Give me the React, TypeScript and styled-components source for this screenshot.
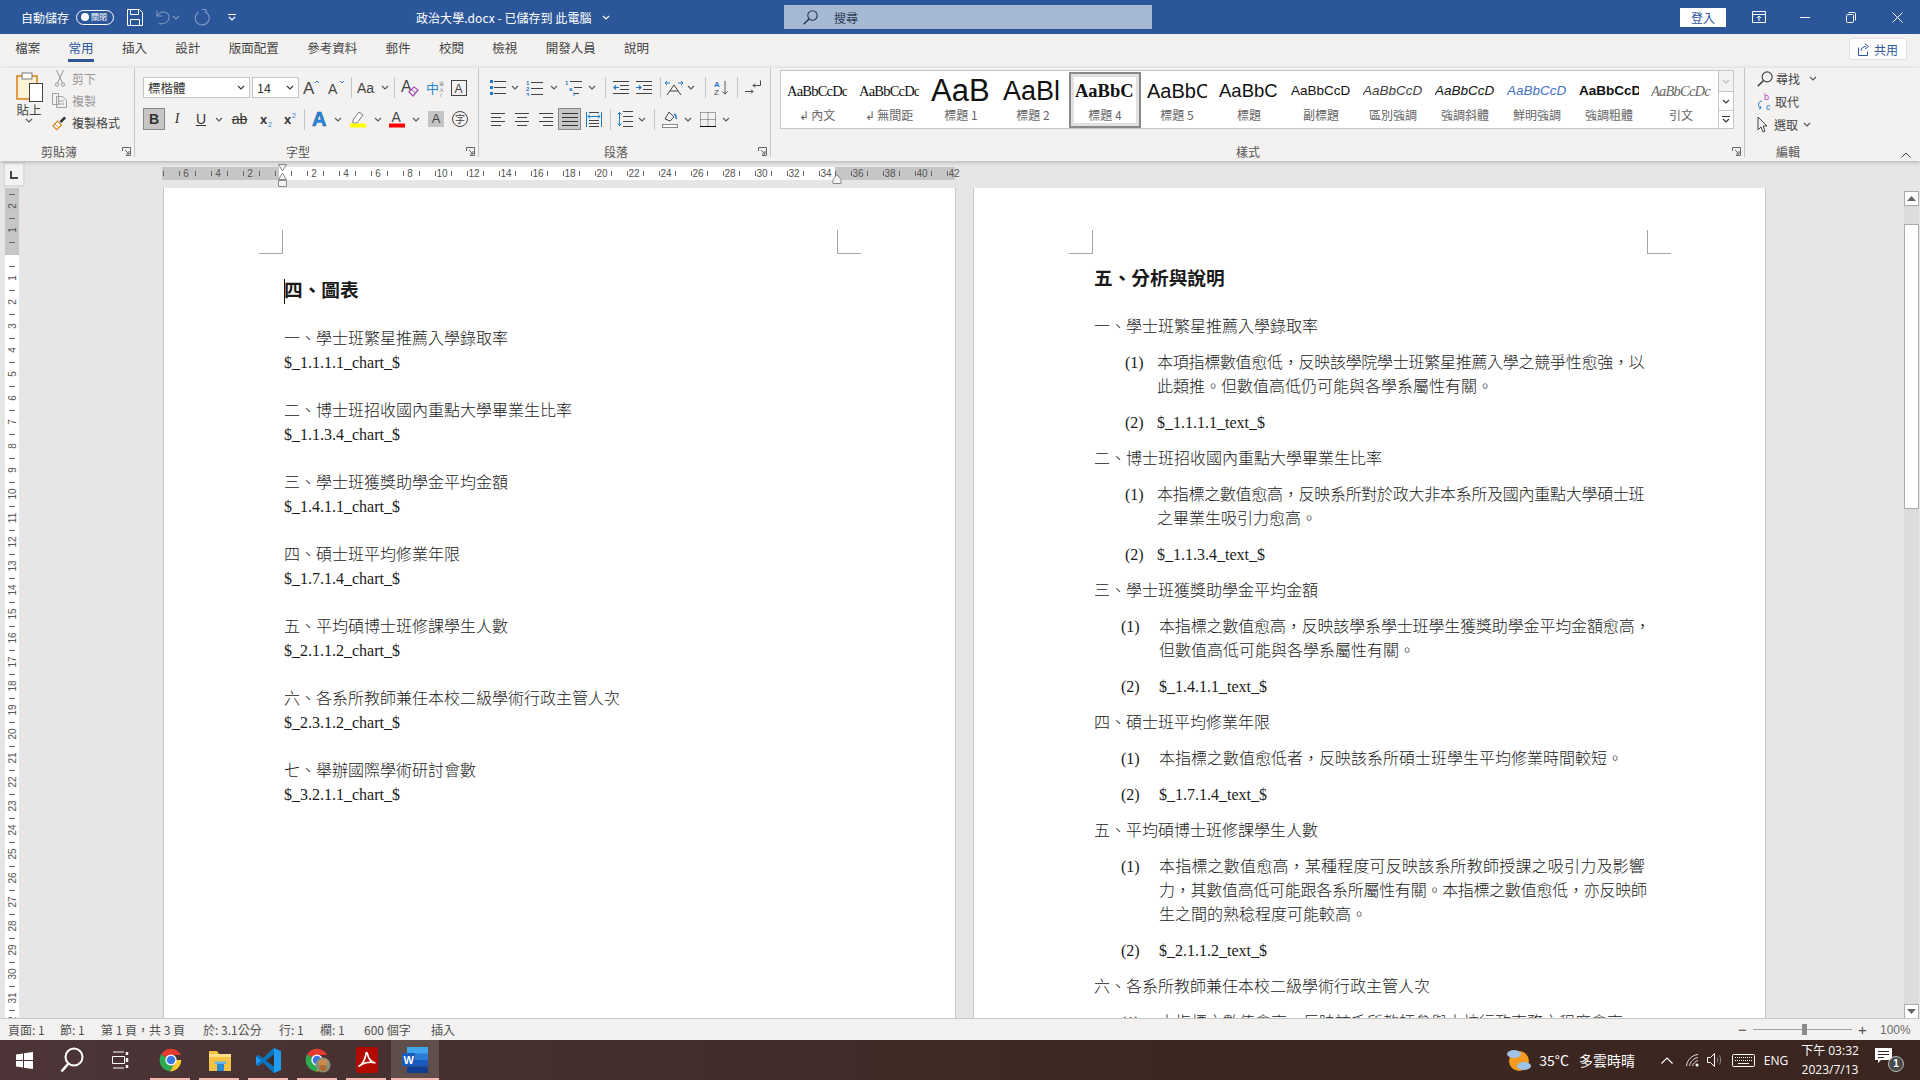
import React from "react";
import styled, { createGlobalStyle } from "styled-components";

const UI = `"Noto Sans CJK TC", "Noto Sans", sans-serif`;
const LATIN = `"Open Sans", "Noto Sans CJK TC", sans-serif`;
const DOC = `"Liberation Serif", "Noto Sans CJK TC", serif`;
const SANS = `"Liberation Sans", sans-serif`;
const SERIF = `"Liberation Serif", serif`;

const Global = createGlobalStyle`
  * { box-sizing: border-box; }
  html, body { margin: 0; padding: 0; overflow: hidden; background: #e6e6e6; }
`;

const Shell = styled.div`
  width: 1920px;
  height: 1080px;
  display: flex;
  flex-direction: column;
  overflow: hidden;
  font-family: ${UI};
  color: #444;
`;

/* ---------- title bar ---------- */
const TitleBar = styled.div`
  height: 34px;
  flex: none;
  display: flex;
  align-items: center;
  background: #2b579a;
  color: #fff;
  font-size: 12px;
`;
const QuickAccess = styled.div`
  width: 416px;
  flex: none;
  display: flex;
  align-items: center;
  padding-left: 21px;
`;
const AutoSave = styled.span`
  width: 50px;
  margin-right: 5px;
  white-space: nowrap;
`;
const Toggle = styled.span`
  width: 38px;
  height: 15px;
  display: flex;
  align-items: center;
  gap: 2px;
  padding-left: 4px;
  border: 1px solid #fff;
  border-radius: 8px;
  font-size: 8px;
  line-height: 1;
  &::before {
    content: "";
    width: 8px;
    height: 8px;
    border-radius: 50%;
    background: #fff;
  }
`;
const QuickTool = styled.span<{ $w: number }>`
  width: ${(p) => p.$w}px;
  display: flex;
  justify-content: center;
  align-items: center;
`;
const DocTitle = styled.div`
  width: 368px;
  flex: none;
  display: flex;
  align-items: center;
  gap: 11px;
  white-space: nowrap;
  letter-spacing: 0.05px;
`;
const SearchBox = styled.div`
  width: 368px;
  height: 24px;
  flex: none;
  display: flex;
  align-items: center;
  gap: 16px;
  padding-left: 19px;
  background: #a6b9d3;
  color: #2b3a55;
`;
const SignIn = styled.span`
  margin-left: auto;
  margin-right: 10px;
  width: 46px;
  height: 19px;
  background: #fff;
  color: #2b579a;
  font-size: 12px;
  line-height: 19px;
  text-align: center;
`;
const WinButton = styled.span`
  width: 46px;
  height: 34px;
  display: flex;
  align-items: center;
  justify-content: center;
`;

/* ---------- tabs ---------- */
const TabBar = styled.div`
  height: 34px;
  flex: none;
  display: flex;
  align-items: stretch;
  padding-left: 1px;
  background: #f3f2f1;
  font-size: 12.5px;
`;
const Tab = styled.span<{ $active?: boolean }>`
  position: relative;
  padding: 0 14.2px;
  line-height: 28px;
  white-space: nowrap;
  color: ${(p) => (p.$active ? "#2b579a" : "#444")};
  ${(p) =>
    p.$active &&
    `&::after { content: ""; position: absolute; left: 14px; right: 14px; top: 25px; height: 3px; background: #2b579a; }`}
`;
const ShareButton = styled.span`
  margin: 4px 13px 0 auto;
  width: 58px;
  height: 22px;
  display: flex;
  align-items: center;
  justify-content: center;
  gap: 3px;
  background: #fff;
  border: 1px solid #e1dfdd;
  border-radius: 2px;
  color: #2b579a;
  font-size: 12px;
`;

/* ---------- ribbon ---------- */
const Ribbon = styled.div`
  position: relative;
  z-index: 2;
  height: 93px;
  flex: none;
  display: flex;
  align-items: flex-start;
  background: #f3f2f1;
  box-shadow: 0 1px 4px rgba(0, 0, 0, 0.25);
`;
const Group = styled.div<{ $w: number; $pl?: number; $last?: boolean }>`
  position: relative;
  width: ${(p) => p.$w}px;
  height: 89px;
  flex: none;
  display: flex;
  flex-direction: column;
  padding-left: ${(p) => p.$pl ?? 0}px;
  border-right: ${(p) => (p.$last ? "0" : "1px solid #c8c6c4")};
`;
const GroupLabel = styled.div<{ $w: number }>`
  margin-top: auto;
  width: ${(p) => p.$w}px;
  height: 10px;
  line-height: 10px;
  text-align: center;
  font-size: 12px;
  color: #555;
`;
const Launcher = styled.svg`
  position: absolute;
  right: 3px;
  bottom: 1px;
  width: 9px;
  height: 9px;
`;
const ToolRow = styled.div<{ $top: number; $h?: number }>`
  display: flex;
  align-items: center;
  height: ${(p) => p.$h ?? 21}px;
  margin-top: ${(p) => p.$top}px;
`;
const Tool = styled.span<{ $w: number; $active?: boolean }>`
  width: ${(p) => p.$w}px;
  height: 22px;
  flex: none;
  display: flex;
  align-items: center;
  justify-content: center;
  ${(p) => p.$active && "background: #c8c6c4; border: 1px solid #8a8886;"}
`;
const Sep = styled.span<{ $w: number }>`
  width: ${(p) => p.$w}px;
  height: 21px;
  flex: none;
  display: flex;
  justify-content: center;
  &::before {
    content: "";
    width: 1px;
    background: #c8c6c4;
  }
`;
const Combo = styled.span<{ $w: number; $mr?: number }>`
  width: ${(p) => p.$w}px;
  height: 21px;
  margin-right: ${(p) => p.$mr ?? 0}px;
  flex: none;
  display: flex;
  align-items: center;
  justify-content: space-between;
  padding: 0 4px;
  background: #fff;
  border: 1px solid #c8c6c4;
  font-size: 12.5px;
  color: #333;
`;

/* clipboard */
const ClipBody = styled.div`
  display: flex;
  height: 66px;
`;
const PasteCol = styled.div`
  width: 46px;
  margin-left: 6px;
  display: flex;
  flex-direction: column;
  align-items: center;
  padding-top: 4px;
  font-size: 12.5px;
  line-height: 16px;
  color: #444;
`;
const ClipCol = styled.div`
  display: flex;
  flex-direction: column;
  margin-top: -1px;
`;
const ClipRow = styled.div<{ $dim?: boolean }>`
  display: flex;
  align-items: center;
  height: 24px;
  gap: 5px;
  font-size: 12px;
  white-space: nowrap;
  color: ${(p) => (p.$dim ? "#9a9a9a" : "#444")};
`;
const ClipIcon = styled.span`
  width: 15px;
  display: flex;
  justify-content: center;
`;

/* gallery */
const Gallery = styled.div`
  width: 954px;
  height: 59px;
  margin: 2px 0 0 9px;
  display: flex;
  background: #fff;
  border: 1px solid #c8c6c4;
`;
const StyleItem = styled.div<{ $selected?: boolean }>`
  width: 72px;
  height: 57px;
  flex: none;
  display: flex;
  flex-direction: column;
  align-items: center;
  padding: ${(p) => (p.$selected ? "1px 4px" : "4px 6px")};
  ${(p) =>
    p.$selected &&
    "margin-top: 1px; height: 56px; border: 2px solid #8a8a8a; outline: 3px solid #e1e1e1; outline-offset: -5px;"}
`;
const StylePreview = styled.div<{ $font: string; $size: number; $bold?: boolean; $italic?: boolean; $color?: string; $ls?: number }>`
  width: 60px;
  height: 32px;
  line-height: 32px;
  overflow: hidden;
  white-space: nowrap;
  text-align: left;
  font-family: ${(p) => p.$font};
  font-size: ${(p) => p.$size}px;
  font-weight: ${(p) => (p.$bold ? 700 : 400)};
  font-style: ${(p) => (p.$italic ? "italic" : "normal")};
  letter-spacing: ${(p) => p.$ls ?? 0}px;
  color: ${(p) => p.$color ?? "#111"};
`;
const StyleName = styled.div`
  height: 16px;
  line-height: 16px;
  font-size: 12px;
  color: #666;
  white-space: nowrap;
`;
const GalleryScroll = styled.div`
  margin-left: auto;
  width: 15px;
  display: flex;
  flex-direction: column;
  border-left: 1px solid #c8c6c4;
  background: #f3f2f1;
`;
const ScrollCell = styled.span<{ $h: number; $on?: boolean }>`
  height: ${(p) => p.$h}px;
  display: flex;
  align-items: center;
  justify-content: center;
  background: ${(p) => (p.$on ? "#fff" : "transparent")};
  & + & {
    border-top: 1px solid #c8c6c4;
  }
`;

/* editing */
const EditBody = styled.div`
  margin-top: -1px;
`;
const EditRow = styled.div<{ $gap?: number }>`
  height: 23px;
  display: flex;
  align-items: center;
  gap: ${(p) => p.$gap ?? 3}px;
  font-size: 12px;
  white-space: nowrap;
`;
const EditCaret = styled.span`
  margin-left: 6px;
  display: flex;
`;
const Collapse = styled.svg`
  position: absolute;
  right: 9px;
  bottom: 3px;
  width: 10px;
  height: 6px;
`;

/* ---------- ruler row ---------- */
const RulerRow = styled.div`
  height: 27px;
  flex: none;
  display: flex;
  align-items: flex-start;
  background: #e6e6e6;
`;
const RulerCorner = styled.div`
  width: 22px;
  height: 25px;
  margin: 1px 137px 0 3px;
  display: flex;
  align-items: center;
  justify-content: center;
  background: #f3f3f3;
  border: 2px solid #dcdcdc;
  &::before {
    content: "";
    width: 6px;
    height: 6px;
    border-left: 2px solid #444;
    border-bottom: 2px solid #444;
  }
`;
const RulerSvg = styled.svg`
  overflow: visible;
`;

/* ---------- workspace ---------- */
const Workspace = styled.div`
  height: 830px;
  flex: none;
  display: flex;
  align-items: flex-start;
  background: #e6e6e6;
  overflow: hidden;
`;
const VRulerBox = styled.div`
  width: 14px;
  margin: 0 144px 0 5px;
  flex: none;
`;
const Pages = styled.div`
  display: flex;
  gap: 17px;
  flex: none;
`;
const Page = styled.div`
  width: 793px;
  height: 830px;
  overflow: hidden;
  padding: 42px 94px 0 95px;
  background: #fff;
  border-left: 1px solid #c6c6c6;
  border-right: 1px solid #c6c6c6;
  font-family: ${DOC};
  font-size: 16px;
  font-weight: 300;
  color: #1a1a1a;
`;
const CropRow = styled.div`
  display: flex;
  justify-content: space-between;
`;
const CropMark = styled.span<{ $right?: boolean }>`
  width: 24px;
  height: 24px;
  border-bottom: 1px solid #a6a6a6;
  ${(p) => (p.$right ? "border-left" : "border-right")}: 1px solid #a6a6a6;
`;
const PageBody = styled.div`
  margin-left: 25px;
`;
const DocHeading = styled.h2<{ $top: number; $caret?: boolean }>`
  position: relative;
  margin: ${(p) => p.$top}px 0 22px;
  font-family: ${DOC};
  font-size: 18.67px;
  line-height: 28px;
  font-weight: 700;
  ${(p) =>
    p.$caret &&
    `&::before { content: ""; position: absolute; left: 0; top: 2px; width: 1px; height: 25px; background: #111; }`}
`;
const ChartBlock = styled.div`
  margin-bottom: 24px;
`;
const DocLine = styled.div`
  line-height: 24px;
  white-space: nowrap;
`;
const SectionLine = styled.div`
  line-height: 24px;
  margin-top: 12px;
  white-space: nowrap;
`;
const Item = styled.div<{ $wide?: boolean }>`
  display: flex;
  margin-top: 12px;
  padding-left: ${(p) => (p.$wide ? 27 : 31)}px;
  line-height: 24px;
`;
const ItemNum = styled.span<{ $wide?: boolean }>`
  width: ${(p) => (p.$wide ? 38 : 32)}px;
  flex: none;
`;
const ItemLine = styled.div<{ $ls?: number }>`
  white-space: nowrap;
  letter-spacing: ${(p) => p.$ls ?? 0}px;
`;

const Scrollbar = styled.div`
  width: 15px;
  height: 828px;
  margin-left: auto;
  margin-right: 1px;
  margin-top: 3px;
  flex: none;
  display: flex;
  flex-direction: column;
  background: #dcdcdc;
`;
const ScrollBtn = styled.span`
  height: 15px;
  flex: none;
  display: flex;
  align-items: center;
  justify-content: center;
  background: #fff;
  border: 1px solid #ababab;
`;
const ScrollThumb = styled.span`
  height: 285px;
  margin: 18px 0 auto;
  background: #fff;
  border: 1px solid #ababab;
  flex: none;
`;

/* ---------- status bar ---------- */
const StatusBar = styled.div`
  height: 22px;
  flex: none;
  display: flex;
  align-items: center;
  padding-left: 8px;
  background: #f3f2f1;
  border-top: 1px solid #c6c6c6;
  font-size: 12px;
  color: #505050;
  position: relative;
  z-index: 2;
`;
const StatusText = styled.span<{ $w: number }>`
  width: ${(p) => p.$w}px;
  flex: none;
  white-space: nowrap;
`;
const ZoomArea = styled.div`
  margin-left: auto;
  display: flex;
  align-items: center;
  padding-right: 8px;
`;
const ZoomSymbol = styled.span`
  width: 9px;
  text-align: center;
  font-family: ${SANS};
  font-size: 15px;
  line-height: 1;
`;
const ZoomTrack = styled.span`
  position: relative;
  width: 99px;
  height: 1px;
  margin: 0 6px;
  background: #a0a0a0;
  &::after {
    content: "";
    position: absolute;
    left: 49px;
    top: -5px;
    width: 5px;
    height: 11px;
    background: #8a8a8a;
  }
`;
const ZoomValue = styled.span`
  width: 32px;
  margin-left: 13px;
  font-family: ${SANS};
  font-size: 12px;
  color: #6b6b6b;
`;

/* ---------- taskbar ---------- */
const Taskbar = styled.div`
  height: 40px;
  flex: none;
  display: flex;
  align-items: stretch;
  background: linear-gradient(90deg, #4d3537 0%, #45302f 25%, #3c2722 60%, #3a251f 100%);
  color: #fff;
  position: relative;
  z-index: 2;
`;
const TaskCell = styled.span<{ $w: number; $pinned?: boolean; $active?: boolean }>`
  position: relative;
  width: ${(p) => p.$w}px;
  flex: none;
  display: flex;
  align-items: center;
  justify-content: center;
  background: ${(p) => (p.$active ? "#5f4e49" : "transparent")};
  ${(p) =>
    p.$pinned &&
    `&::after { content: ""; position: absolute; bottom: 0; height: 2px; background: #f3b9b0; left: ${p.$active ? 0 : 4}px; right: ${p.$active ? 0 : 5}px; }`}
`;
const Tray = styled.div`
  margin-left: auto;
  display: flex;
  align-items: center;
  white-space: nowrap;
`;
const TrayItem = styled.span<{ $w: number; $font?: string; $size?: number; $mr?: number }>`
  width: ${(p) => p.$w}px;
  margin-right: ${(p) => p.$mr ?? 0}px;
  flex: none;
  display: flex;
  align-items: center;
  justify-content: center;
  font-family: ${(p) => p.$font ?? UI};
  font-size: ${(p) => p.$size ?? 14}px;
`;
const Clock = styled.span`
  width: 78px;
  flex: none;
  display: flex;
  flex-direction: column;
  align-items: center;
  font-family: ${LATIN};
  font-size: 12px;
  line-height: 19px;
`;
const Badge = styled.span`
  position: absolute;
  left: 13px;
  bottom: 0;
  width: 16px;
  height: 16px;
  border-radius: 50%;
  background: #4a4a4a;
  border: 1px solid #bdbdbd;
  font-family: ${SANS};
  font-size: 10px;
  font-weight: 700;
  line-height: 14px;
  text-align: center;
`;
const NotifyCell = styled.span`
  position: relative;
  width: 30px;
  height: 24px;
  margin-left: 6px;
  margin-right: 15px;
  display: flex;
  align-items: flex-start;
`;

/* ---------- icons ---------- */
const Caret = ({ color = "#555" }: { color?: string }) => (
  <svg width="8" height="5" viewBox="0 0 8 5">
    <path d="M1 1l3 3 3-3" fill="none" stroke={color} strokeWidth="1.1" />
  </svg>
);

const SaveIcon = () => (
  <svg width="16" height="17" viewBox="0 0 16 17" fill="none" stroke="#fff">
    <path d="M.5.5h12l3 3v13H.5z" />
    <path d="M3.5.5v5h8v-5M3.5 16.5v-6h9v6" />
  </svg>
);
const UndoIcon = () => (
  <svg width="15" height="17" viewBox="0 0 15 17" fill="none" stroke="#7f9bc4" strokeWidth="1.1">
    <path d="M5 16l-1-1c6 1 10-2 10-7S9 2 5 3L1 6.5M1 1v6h6" />
  </svg>
);
const RedoIcon = () => (
  <svg width="16" height="17" viewBox="0 0 16 17" fill="none" stroke="#7f9bc4" strokeWidth="1.1">
    <path d="M11 2.5A7 7 0 1 1 4.5 3M8 .5h4v4" />
  </svg>
);
const MoreIcon = ({ color = "#fff" }: { color?: string }) => (
  <svg width="8" height="7" viewBox="0 0 8 7" fill="none" stroke={color}>
    <path d="M0 .5h8" />
    <path d="M1 3l3 3 3-3" strokeWidth="1.2" />
  </svg>
);
const SearchGlass = ({ color = "#26354f", size = 15 }: { color?: string; size?: number }) => (
  <svg width={size} height={size} viewBox="0 0 15 15" fill="none" stroke={color} strokeWidth="1.1">
    <circle cx="9.5" cy="5.5" r="4.7" />
    <path d="M6 9L.7 14.3" strokeWidth="1.4" />
  </svg>
);
const RibbonModeIcon = () => (
  <svg width="14" height="12" viewBox="0 0 14 12" fill="none" stroke="#fff">
    <path d="M.5.5h13v11H.5zM.5 3.5h13M7 10V5.5M5 7l2-2 2 2" />
  </svg>
);
const MinIcon = () => (
  <svg width="10" height="1" viewBox="0 0 10 1">
    <path d="M0 .5h10" stroke="#fff" />
  </svg>
);
const RestoreIcon = () => (
  <svg width="10" height="11" viewBox="0 0 10 11" fill="none" stroke="#fff">
    <rect x=".5" y="2.5" width="7" height="8" rx="1" />
    <path d="M2.5 .5h6a1 1 0 0 1 1 1v7" />
  </svg>
);
const CloseIcon = () => (
  <svg width="11" height="11" viewBox="0 0 11 11" stroke="#fff">
    <path d="M.5.5l10 10M10.5.5l-10 10" />
  </svg>
);
const ShareIcon = () => (
  <svg width="13" height="13" viewBox="0 0 13 13" fill="none" stroke="#2b579a">
    <path d="M.5 4.5v8h9v-4M3 8c0-3 2-4.5 5-4.5M7 .8l3.5 2.7L7 6.2" />
  </svg>
);

const PasteIcon = () => (
  <svg width="27" height="30" viewBox="0 0 27 30">
    <rect x="1" y="4" width="20" height="23" fill="#fff4d6" stroke="#d9801a" strokeWidth="1.5" />
    <rect x="6" y="1" width="10" height="6" fill="#fff" stroke="#777" />
    <rect x="13.5" y="11.5" width="13" height="18" fill="#fff" stroke="#444" />
  </svg>
);
const CutIcon = () => (
  <svg width="10" height="17" viewBox="0 0 10 17" fill="none" stroke="#999" strokeWidth="1">
    <circle cx="2" cy="14.5" r="1.7" />
    <circle cx="8" cy="14.5" r="1.7" />
    <path d="M2.5 13L8.5 0M7.5 13L1.5 0" />
  </svg>
);
const CopyIcon = () => (
  <svg width="15" height="15" viewBox="0 0 15 15" fill="none" stroke="#a0a0a0">
    <path d="M.5.5h6v11h-6zM4.5 3.5h6l4 4v7h-10zM7 8h5M7 11h5" />
  </svg>
);
const BrushIcon = () => (
  <svg width="16" height="16" viewBox="0 0 16 16" fill="none">
    <path d="M1 11l5-5 4 4-5 5z" fill="#fff" stroke="#d9801a" strokeWidth="1.3" />
    <path d="M3 9l4 4" stroke="#d9801a" />
    <path d="M8 6l5-5 2 2-5 5z" fill="#333" />
  </svg>
);
const FontA = styled.text<{ $size: number }>`
  font-family: ${SANS};
  font-size: ${(p) => p.$size}px;
`;
const GrowIcon = ({ down, size }: { down?: boolean; size: number }) => (
  <svg width="17" height="18" viewBox="0 0 17 18">
    <FontA x="0" y="15" $size={size} fill="#444">A</FontA>
    <path d={down ? "M12 2l2 2 2-2" : "M12 4l2-2 2 2"} fill="none" stroke="#2b7cd3" />
  </svg>
);
const AaIcon = () => (
  <svg width="18" height="16" viewBox="0 0 18 16">
    <FontA x="0" y="13" $size={14} fill="#444">Aa</FontA>
  </svg>
);
const ClearFormatIcon = () => (
  <svg width="18" height="18" viewBox="0 0 18 18">
    <FontA x="0" y="13" $size={16} fill="#444">A</FontA>
    <path d="M8 13l5-5 4 3-5 6z" fill="#fff" stroke="#a64ab0" strokeWidth="1.3" />
    <path d="M10.5 10.5l4 3.5" stroke="#a64ab0" />
  </svg>
);
const PhoneticIcon = () => (
  <svg width="18" height="18" viewBox="0 0 18 18">
    <text x="0" y="14" fontSize="13" fontFamily={UI} fill="#2b88d8">中</text>
    <text x="13" y="6" fontSize="5" fontFamily={UI} fill="#666">ㄓ</text>
    <text x="13" y="12" fontSize="5" fontFamily={UI} fill="#666">ㄨ</text>
    <text x="13" y="18" fontSize="5" fontFamily={UI} fill="#666">ㄥ</text>
  </svg>
);
const BoxAIcon = () => (
  <svg width="16" height="16" viewBox="0 0 16 16">
    <rect x=".5" y=".5" width="15" height="15" fill="none" stroke="#444" />
    <FontA x="3.5" y="12.5" $size={12} fill="#444">A</FontA>
  </svg>
);
const LetterTool = styled.span<{ $bold?: boolean; $italic?: boolean; $under?: boolean; $strike?: boolean; $serif?: boolean }>`
  font-family: ${(p) => (p.$serif ? SERIF : SANS)};
  font-size: 14px;
  line-height: 1;
  color: #333;
  font-weight: ${(p) => (p.$bold ? 700 : 400)};
  font-style: ${(p) => (p.$italic ? "italic" : "normal")};
  text-decoration: ${(p) => (p.$under ? "underline" : p.$strike ? "line-through" : "none")};
`;
const ScriptIcon = ({ sup }: { sup?: boolean }) => (
  <svg width="13" height="15" viewBox="0 0 13 15">
    <FontA x="0" y="12" $size={13} fill="#333" fontWeight="700">x</FontA>
    <FontA x="8" y={sup ? 6 : 15} $size={7} fill="#2b88d8">2</FontA>
  </svg>
);
const EffectIcon = () => (
  <svg width="17" height="18" viewBox="0 0 17 18">
    <FontA x="0" y="16" $size={20} fill="#2b88d8" stroke="#1a5fa8" strokeWidth=".6" fontWeight="700">A</FontA>
  </svg>
);
const MarkerIcon = () => (
  <svg width="16" height="18" viewBox="0 0 16 18">
    <path d="M3 10l6-8 4 3-6 8H3z" fill="#fff" stroke="#777" />
    <rect y="13.5" width="16" height="4" fill="#ffff00" />
  </svg>
);
const ColorAIcon = () => (
  <svg width="16" height="18" viewBox="0 0 16 18">
    <FontA x="2.5" y="12" $size={14} fill="#444">A</FontA>
    <rect y="13.5" width="16" height="4" fill="#f00" />
  </svg>
);
const ShadedA = styled.span`
  width: 16px;
  height: 16px;
  background: #c4c4c4;
  font-family: ${SANS};
  font-size: 13px;
  line-height: 16px;
  text-align: center;
`;
const EncloseIcon = styled.span`
  width: 16px;
  height: 16px;
  border: 1px solid #444;
  border-radius: 50%;
  font-size: 10px;
  line-height: 14px;
  text-align: center;
`;

const Lines = ({ w = 14, gap = 5, n = 3, x = 0 }: { w?: number; gap?: number; n?: number; x?: number }) => (
  <>
    {Array.from({ length: n }).map((_, i) => (
      <path key={i} d={`M${x} ${1.5 + i * gap}h${w}`} stroke="#444" />
    ))}
  </>
);
const BulletIcon = () => (
  <svg width="16" height="15" viewBox="0 0 16 15">
    <Lines x={4} w={12} gap={6} />
    {[0, 6, 12].map((y) => (
      <rect key={y} y={y} width="3" height="3" fill="#1f7bc8" />
    ))}
  </svg>
);
const SmallNum = styled.text`
  font-family: ${SANS};
  font-size: 6px;
  font-weight: 700;
  fill: #1f7bc8;
`;
const NumberIcon = () => (
  <svg width="17" height="16" viewBox="0 0 17 16">
    <g transform="translate(0 1)"><Lines x={5} w={12} gap={6} /></g>
    {["1", "2", "3"].map((t, i) => (
      <SmallNum key={t} x="0" y={5 + i * 6}>{t}</SmallNum>
    ))}
  </svg>
);
const MultiIcon = () => (
  <svg width="17" height="16" viewBox="0 0 17 16">
    <path d="M5 1.5h12M9 7.5h8M9 13.5h5" stroke="#444" />
    <SmallNum x="0" y="5">1</SmallNum>
    <SmallNum x="4" y="11">a</SmallNum>
    <SmallNum x="8" y="16">i</SmallNum>
  </svg>
);
const IndentIcon = ({ inc }: { inc?: boolean }) => (
  <svg width="16" height="13" viewBox="0 0 16 13">
    <path d="M0 .5h16M7 4.5h9M7 8.5h9M0 12.5h16" stroke="#444" />
    <path d={inc ? "M0 6.5h5M3 4.5l2 2-2 2" : "M6 6.5H1M3 4.5l-2 2 2 2"} fill="none" stroke="#1f7bc8" strokeWidth="1.2" />
  </svg>
);
const TextDirIcon = () => (
  <svg width="18" height="16" viewBox="0 0 18 16" fill="none">
    <path d="M2 15l7-10 7 10M5 11h8" stroke="#444" />
    <path d="M0 3h5M2 1L0 3l2 2M18 3h-5M16 1l2 2-2 2" stroke="#1f7bc8" />
  </svg>
);
const SortIcon = () => (
  <svg width="17" height="17" viewBox="0 0 17 17">
    <FontA x="0" y="7.5" $size={9} fontWeight="700" fill="#1f7bc8">A</FontA>
    <FontA x="0" y="16.5" $size={9} fill="#444">Z</FontA>
    <path d="M12.5 1v15M9.5 13l3 3 3-3" fill="none" stroke="#444" />
  </svg>
);
const BreakIcon = () => (
  <svg width="17" height="15" viewBox="0 0 17 15" fill="none" stroke="#444">
    <path d="M8 5.5h7.5v-5M8 5.5l2-2M8 5.5l2 2M0 11.5h8M6 9.5l2 2-2 2" />
  </svg>
);
const AlignIcon = ({ mode }: { mode: "left" | "center" | "right" }) => {
  const short = mode === "left" ? "M0 4.5h10M0 12.5h10" : mode === "center" ? "M2 4.5h10M2 12.5h10" : "M4 4.5h10M4 12.5h10";
  return (
    <svg width="14" height="13" viewBox="0 0 14 13">
      <path d="M0 .5h14M0 8.5h14" stroke="#444" />
      <path d={short} stroke="#444" />
    </svg>
  );
};
const JustifyIcon = () => (
  <svg width="16" height="13" viewBox="0 0 16 13" stroke="#333">
    <path d="M0 .5h16M0 4.5h16M0 8.5h16M0 12.5h16" />
  </svg>
);
const DistributeIcon = () => (
  <svg width="16" height="15" viewBox="0 0 16 15" fill="none">
    <path d="M.5 0v15M15.5 0v15" stroke="#1f7bc8" />
    <path d="M3 .5h10M3 8.5h10M3 11.5h10M3 14.5h10" stroke="#444" />
    <path d="M2 4.5h12M4 2.5l-2 2 2 2M12 2.5l2 2-2 2" stroke="#1f7bc8" />
  </svg>
);
const LineSpacingIcon = () => (
  <svg width="16" height="16" viewBox="0 0 16 16" fill="none">
    <path d="M6 .5h10M6 5.5h10M6 10.5h10M6 15.5h10" stroke="#444" />
    <path d="M2.5 1v14M.5 3.5l2-2 2 2M.5 12.5l2 2 2-2" stroke="#1f7bc8" />
  </svg>
);
const ShadingIcon = () => (
  <svg width="16" height="17" viewBox="0 0 16 17" fill="none">
    <path d="M3 8l4-7 5 5-4 4z" stroke="#444" />
    <path d="M12 3c2 1 2.5 3 2 5" stroke="#2b7cd3" strokeWidth="1.5" />
    <rect x=".5" y="13.5" width="15" height="3" fill="#fff" stroke="#888" />
  </svg>
);
const BorderIcon = () => (
  <svg width="16" height="15" viewBox="0 0 16 15" fill="none">
    <path d="M.5.5h15v14M.5.5v14M8 .5v14M.5 7.5h15" stroke="#555" strokeDasharray="1 1" />
    <path d="M0 14.5h16" stroke="#111" />
  </svg>
);
const ReplaceIcon = () => (
  <svg width="15" height="18" viewBox="0 0 15 18" fill="none">
    <text x="7" y="7" fontSize="9" fontFamily={SANS} fill="#b146c2">b</text>
    <text x="9" y="17" fontSize="9" fontFamily={SANS} fill="#1f7bc8">c</text>
    <path d="M5 8C1 8 0 14 4 15M3 13l1 2-2 1" stroke="#1f7bc8" />
  </svg>
);
const PointerIcon = () => (
  <svg width="12" height="17" viewBox="0 0 12 17" fill="none" stroke="#444">
    <path d="M1 1v13l3-3 2 5 2-1-2-5h4z" />
  </svg>
);
const LauncherIcon = () => (
  <Launcher viewBox="0 0 9 9" fill="none" stroke="#666">
    <path d="M.5 4V.5H8.5V8.5H4M3 3l4 4M7 4v3H4" />
  </Launcher>
);

/* taskbar logos */
const WinLogo = () => (
  <svg width="17" height="17" viewBox="0 0 17 17" fill="#fff">
    <path d="M0 2.4l7-1v6.6H0zM8 1.2L17 0v8H8zM0 9h7v6.6l-7-1zM8 9h9v8l-9-1.2z" />
  </svg>
);
const TaskGlass = () => (
  <svg width="24" height="26" viewBox="0 0 24 26" fill="none" stroke="#fff" strokeWidth="2">
    <circle cx="14" cy="10" r="8.5" />
    <path d="M8 17L1.5 24.5" strokeWidth="2.6" />
  </svg>
);
const TaskView = () => (
  <svg width="18" height="18" viewBox="0 0 18 18" fill="none" stroke="#fff">
    <path d="M1 1h11M1 17h11M.5 5.5h12v7H.5z" />
    <path d="M15 1v3M15 7v4M15 14v3" strokeWidth="2.5" />
  </svg>
);
const ChromeWheel = () => (
  <>
    <path d="M12 12L2 6.5A11.5 11.5 0 0 1 22.3 7H12z" fill="#e33b2e" />
    <path d="M12 12L2 6.5A11.5 11.5 0 0 0 11 23.4L17 13z" fill="#2da94f" />
    <path d="M12 12h10.3A11.5 11.5 0 0 1 11 23.4L17 13z" fill="#fcc934" />
    <circle cx="12" cy="12" r="5.6" fill="#fff" />
    <circle cx="12" cy="12" r="4.3" fill="#3b78e7" />
  </>
);
const ChromeLogo = () => (
  <svg width="24" height="24" viewBox="0 0 24 24">
    <ChromeWheel />
  </svg>
);
const ChromeProfile = () => (
  <svg width="26" height="26" viewBox="0 0 26 26">
    <g transform="translate(0 1)"><ChromeWheel /></g>
    <circle cx="18" cy="18" r="7.5" fill="#8a8f7a" />
    <ellipse cx="18" cy="16" rx="4.5" ry="4" fill="#c98a4a" />
    <ellipse cx="18" cy="21" rx="3.5" ry="3" fill="#a9682f" />
  </svg>
);
const FolderLogo = () => (
  <svg width="22" height="21" viewBox="0 0 22 21">
    <path d="M0 1h8l2 3h12v17H0z" fill="#f4c344" />
    <rect y="4" width="22" height="3" fill="#fbe08a" />
    <rect x="8" y="13" width="7" height="8" fill="#2b8ad6" />
    <rect x="6" y="11.5" width="11" height="2.5" fill="#61b4ec" />
  </svg>
);
const VSCodeLogo = () => (
  <svg width="25" height="25" viewBox="0 0 25 25">
    <path d="M18 0l7 3v19l-7 3-11-10.5L2 18l-2-1.5v-8L2 7l5 3.5z" fill="#1f9cf0" />
    <path d="M18 0v25L7 14.5 2 18 0 16.5 5 12.5 0 8.5 2 7l5 3.5z" fill="#0a74bd" />
    <path d="M18 6.5v12l-8-6z" fill="#3b2a26" />
  </svg>
);
const AcrobatLogo = () => (
  <svg width="22" height="26" viewBox="0 0 22 26">
    <rect width="22" height="26" rx="3" fill="#b30b00" />
    <path d="M3 19c3-1 6-6 7-12 0-2 1-2 1.5 0 1 5 3 8 8 9-4-1-10-.5-13 1-2 1-4 3-3.5 2z" fill="none" stroke="#fff" strokeWidth="1.6" />
  </svg>
);
const WordLogo = () => (
  <svg width="26" height="26" viewBox="0 0 26 26">
    <rect x="5" width="21" height="7" fill="#41a5ee" />
    <rect x="5" y="6.5" width="21" height="6.5" fill="#2b7cd3" />
    <rect x="5" y="13" width="21" height="6.5" fill="#185abd" />
    <rect x="5" y="19.5" width="21" height="6.5" fill="#103f91" />
    <rect y="6" width="13" height="13" rx="1" fill="#185abd" />
    <text x="1.5" y="16.5" fontFamily={SANS} fontSize="11" fontWeight="700" fill="#fff">W</text>
  </svg>
);
const WeatherIcon = () => (
  <svg width="24" height="25" viewBox="0 0 24 25">
    <circle cx="12" cy="13" r="10" fill="#f39a1f" />
    <ellipse cx="7" cy="6" rx="7" ry="4" fill="#9dc3e6" />
    <ellipse cx="17" cy="18" rx="7" ry="4" fill="#9dc3e6" />
  </svg>
);
const TrayUp = () => (
  <svg width="12" height="7" viewBox="0 0 12 7" fill="none" stroke="#fff" strokeWidth="1.2">
    <path d="M.5 6.5L6 1l5.5 5.5" />
  </svg>
);
const WifiIcon = () => (
  <svg width="13" height="13" viewBox="0 0 13 13" fill="none" stroke="#ddd">
    <path d="M.5 12C1 6 6 1 12 .5M3.5 12C4 8 8 4 12 3.5M6.5 12c.3-2 3-5 5.5-5.5" />
    <circle cx="11" cy="11" r="1.5" fill="#fff" stroke="none" />
  </svg>
);
const VolumeIcon = () => (
  <svg width="16" height="14" viewBox="0 0 16 14" fill="none" stroke="#fff">
    <path d="M.5 4.5h3l4-4v13l-4-4h-3z" />
    <path d="M10 4.5c1 1.5 1 3.5 0 5M12.5 2.5c1.5 3 1.5 6 0 9" stroke="#888" />
  </svg>
);
const KeyboardIcon = () => (
  <svg width="23" height="13" viewBox="0 0 23 13" fill="none" stroke="#fff">
    <rect x=".5" y=".5" width="22" height="12" rx="1" />
    <path d="M3 3.5h17M3 6.5h17" strokeDasharray="1 1" />
    <path d="M6 9.5h11" />
  </svg>
);
const NotifyIcon = () => (
  <svg width="17" height="16" viewBox="0 0 17 16">
    <path d="M0 0h17v12H6l-3 3v-3H0z" fill="#fff" />
    <path d="M3 3.5h11M3 6.5h11M3 9.5h6" stroke="#3a251f" />
  </svg>
);

/* ---------- rulers ---------- */
const RulerNum = styled.text`
  font-family: ${SANS};
  font-size: 10px;
  fill: #555;
`;
const HRuler = () => {
  const ox = 120; // 0 在 x=282，尺從 162 開始
  const ticks = Array.from({ length: 50 }, (_, i) => i * 16 + 1);
  const nums = [-6, -4, -2, 2, 4, 6, 8, 10, 12, 14, 16, 18, 20, 22, 24, 26, 28, 30, 32, 34, 36, 38, 40, 42];
  return (
    <RulerSvg width="800" height="27" viewBox="0 0 800 27">
      <rect y="6" width="793" height="13" fill="#c6c6c6" />
      <rect x="117" y="6" width="556" height="13" fill="#fff" />
      {ticks.map((x) => (
        <path key={x} d={`M${x + 0.5} 10v5`} stroke="#666" />
      ))}
      {nums.map((n) => (
        <RulerNum key={n} x={ox + n * 16} y="16" textAnchor="middle">
          {Math.abs(n)}
        </RulerNum>
      ))}
      <path d="M116.5 3.5h8L120.5 10zM116.5 18.5L120.5 12l4 6.5zM116.5 19.5h8v6h-8z" fill="#f3f3f3" stroke="#8a8a8a" />
      <path d="M671 18.5l4-5 4 5v4h-8z" fill="#f3f3f3" stroke="#8a8a8a" />
    </RulerSvg>
  );
};
const VRuler = () => {
  const toY = (n: number) => 66 + n * 24;
  const nums = [-2, -1, ...Array.from({ length: 32 }, (_, i) => i + 1)];
  const ticks = Array.from({ length: 36 }, (_, i) => i - 3);
  return (
    <svg width="14" height="830" viewBox="0 0 14 830">
      <rect width="14" height="67" fill="#c6c6c6" />
      <rect y="67" width="14" height="763" fill="#fff" />
      {ticks.map((t) => (
        <path key={t} d={`M4 ${toY(t) + 12.5}h6`} stroke="#666" />
      ))}
      {nums.map((n) => (
        <RulerNum key={n} transform={`translate(10.5 ${toY(n)}) rotate(-90)`} textAnchor="middle">
          {Math.abs(n)}
        </RulerNum>
      ))}
    </svg>
  );
};

/* ---------- data ---------- */
type GalleryEntry = { name: string; font: string; size: number; text?: string; bold?: boolean; italic?: boolean; color?: string; ls?: number; selected?: boolean };
const GALLERY: GalleryEntry[] = [
  { name: "↲ 內文", font: SERIF, size: 14.5, ls: -0.8, text: "AaBbCcDc" },
  { name: "↲ 無間距", font: SERIF, size: 14.5, ls: -0.8, text: "AaBbCcDc" },
  { name: "標題 1", font: SANS, size: 31, text: "AaB" },
  { name: "標題 2", font: SANS, size: 27, text: "AaBl" },
  { name: "標題 4", font: SERIF, size: 18.5, bold: true, text: "AaBbC", selected: true },
  { name: "標題 5", font: SANS, size: 20, text: "AaBbC" },
  { name: "標題", font: SANS, size: 18.5, text: "AaBbC" },
  { name: "副標題", font: SANS, size: 13.5, text: "AaBbCcD" },
  { name: "區別強調", font: SANS, size: 13.5, italic: true, color: "#404040", text: "AaBbCcD" },
  { name: "強調斜體", font: SANS, size: 13.5, italic: true, text: "AaBbCcD" },
  { name: "鮮明強調", font: SANS, size: 13.5, italic: true, color: "#4472c4", text: "AaBbCcD" },
  { name: "強調粗體", font: SANS, size: 13.5, bold: true, text: "AaBbCcD" },
  { name: "引文", font: SERIF, size: 14.5, italic: true, color: "#666", ls: -0.8, text: "AaBbCcDc" },
];

const CHARTS = [
  ["一、學士班繁星推薦入學錄取率", "$_1.1.1.1_chart_$"],
  ["二、博士班招收國內重點大學畢業生比率", "$_1.1.3.4_chart_$"],
  ["三、學士班獲獎助學金平均金額", "$_1.4.1.1_chart_$"],
  ["四、碩士班平均修業年限", "$_1.7.1.4_chart_$"],
  ["五、平均碩博士班修課學生人數", "$_2.1.1.2_chart_$"],
  ["六、各系所教師兼任本校二級學術行政主管人次", "$_2.3.1.2_chart_$"],
  ["七、舉辦國際學術研討會數", "$_3.2.1.1_chart_$"],
];

type Section = { title: string; lines: [string, number?][]; code?: string; wide?: boolean };
const SECTIONS: Section[] = [
  {
    title: "一、學士班繁星推薦入學錄取率",
    lines: [["本項指標數值愈低，反映該學院學士班繁星推薦入學之競爭性愈強，以", -0.28], ["此類推。但數值高低仍可能與各學系屬性有關。"]],
    code: "$_1.1.1.1_text_$",
  },
  {
    title: "二、博士班招收國內重點大學畢業生比率",
    lines: [["本指標之數值愈高，反映系所對於政大非本系所及國內重點大學碩士班", -0.28], ["之畢業生吸引力愈高。"]],
    code: "$_1.1.3.4_text_$",
  },
  {
    title: "三、學士班獲獎助學金平均金額",
    lines: [["本指標之數值愈高，反映該學系學士班學生獲獎助學金平均金額愈高，", -0.15], ["但數值高低可能與各學系屬性有關。"]],
    code: "$_1.4.1.1_text_$",
    wide: true,
  },
  {
    title: "四、碩士班平均修業年限",
    lines: [["本指標之數值愈低者，反映該系所碩士班學生平均修業時間較短。"]],
    code: "$_1.7.1.4_text_$",
    wide: true,
  },
  {
    title: "五、平均碩博士班修課學生人數",
    lines: [["本指標之數值愈高，某種程度可反映該系所教師授課之吸引力及影響", 0.2], ["力，其數值高低可能跟各系所屬性有關。本指標之數值愈低，亦反映師", -0.27], ["生之間的熟稔程度可能較高。"]],
    code: "$_2.1.1.2_text_$",
    wide: true,
  },
  {
    title: "六、各系所教師兼任本校二級學術行政主管人次",
    lines: [["本指標之數值愈高，反映該系所教師參與本校行政事務之程度愈高。"]],
    wide: true,
  },
];

const STATUS: [string, number][] = [
  ["頁面: 1", 52],
  ["節: 1", 41],
  ["第 1 頁，共 3 頁", 102],
  ["於: 3.1公分", 76],
  ["行: 1", 41],
  ["欄: 1", 44],
  ["600 個字", 67],
  ["插入", 40],
];

const TABS = ["檔案", "常用", "插入", "設計", "版面配置", "參考資料", "郵件", "校閱", "檢視", "開發人員", "說明"];

export default function App() {
  return (
    <Shell>
      <Global />
      <TitleBar>
        <QuickAccess>
          <AutoSave>自動儲存</AutoSave>
          <Toggle>關閉</Toggle>
          <QuickTool $w={42}><SaveIcon /></QuickTool>
          <QuickTool $w={14}><UndoIcon /></QuickTool>
          <QuickTool $w={12}><Caret color="#7f9bc4" /></QuickTool>
          <QuickTool $w={40}><RedoIcon /></QuickTool>
          <QuickTool $w={20}><MoreIcon /></QuickTool>
        </QuickAccess>
        <DocTitle>
          <span>政治大學.docx - 已儲存到 此電腦</span>
          <Caret color="#fff" />
        </DocTitle>
        <SearchBox>
          <SearchGlass />
          <span>搜尋</span>
        </SearchBox>
        <SignIn>登入</SignIn>
        <WinButton><RibbonModeIcon /></WinButton>
        <WinButton><MinIcon /></WinButton>
        <WinButton><RestoreIcon /></WinButton>
        <WinButton><CloseIcon /></WinButton>
      </TitleBar>

      <TabBar>
        {TABS.map((t) => (
          <Tab key={t} $active={t === "常用"}>{t}</Tab>
        ))}
        <ShareButton><ShareIcon />共用</ShareButton>
      </TabBar>

      <Ribbon>
        <Group $w={135}>
          <ClipBody>
            <PasteCol>
              <PasteIcon />
              <span>貼上</span>
              <Caret />
            </PasteCol>
            <ClipCol>
              <ClipRow $dim><ClipIcon><CutIcon /></ClipIcon>剪下</ClipRow>
              <ClipRow $dim><ClipIcon><CopyIcon /></ClipIcon>複製</ClipRow>
              <ClipRow><ClipIcon><BrushIcon /></ClipIcon>複製格式</ClipRow>
            </ClipCol>
          </ClipBody>
          <GroupLabel $w={118}>剪貼簿</GroupLabel>
          <LauncherIcon />
        </Group>

        <Group $w={344} $pl={8}>
          <ToolRow $top={9}>
            <Combo $w={107} $mr={2}>標楷體<Caret color="#333" /></Combo>
            <Combo $w={47}>14<Caret color="#333" /></Combo>
            <Tool $w={25}><GrowIcon size={17} /></Tool>
            <Tool $w={25}><GrowIcon down size={14} /></Tool>
            <Sep $w={5} />
            <Tool $w={24}><AaIcon /></Tool>
            <Tool $w={14}><Caret /></Tool>
            <Sep $w={5} />
            <Tool $w={26}><ClearFormatIcon /></Tool>
            <Tool $w={24}><PhoneticIcon /></Tool>
            <Tool $w={24}><BoxAIcon /></Tool>
          </ToolRow>
          <ToolRow $top={10} $h={22}>
            <Tool $w={22} $active><LetterTool $bold>B</LetterTool></Tool>
            <Tool $w={24}><LetterTool $italic $serif>I</LetterTool></Tool>
            <Tool $w={24}><LetterTool $under>U</LetterTool></Tool>
            <Tool $w={12}><Caret /></Tool>
            <Tool $w={29}><LetterTool $strike>ab</LetterTool></Tool>
            <Tool $w={24}><ScriptIcon /></Tool>
            <Tool $w={24}><ScriptIcon sup /></Tool>
            <Sep $w={5} />
            <Tool $w={26}><EffectIcon /></Tool>
            <Tool $w={10}><Caret /></Tool>
            <Tool $w={30}><MarkerIcon /></Tool>
            <Tool $w={10}><Caret /></Tool>
            <Tool $w={28}><ColorAIcon /></Tool>
            <Tool $w={10}><Caret /></Tool>
            <Tool $w={30}><ShadedA>A</ShadedA></Tool>
            <Tool $w={18}><EncloseIcon>字</EncloseIcon></Tool>
          </ToolRow>
          <GroupLabel $w={310}>字型</GroupLabel>
          <LauncherIcon />
        </Group>

        <Group $w={292} $pl={7}>
          <ToolRow $top={9}>
            <Tool $w={24}><BulletIcon /></Tool>
            <Tool $w={10}><Caret /></Tool>
            <Tool $w={29}><NumberIcon /></Tool>
            <Tool $w={10}><Caret /></Tool>
            <Tool $w={28}><MultiIcon /></Tool>
            <Tool $w={10}><Caret /></Tool>
            <Sep $w={16} />
            <Tool $w={16}><IndentIcon /></Tool>
            <Tool $w={30}><IndentIcon inc /></Tool>
            <Sep $w={2} />
            <Tool $w={25}><TextDirIcon /></Tool>
            <Tool $w={10}><Caret /></Tool>
            <Sep $w={18} />
            <Tool $w={15}><SortIcon /></Tool>
            <Sep $w={16} />
            <Tool $w={17}><BreakIcon /></Tool>
          </ToolRow>
          <ToolRow $top={10} $h={22}>
            <Tool $w={24}><AlignIcon mode="left" /></Tool>
            <Tool $w={24}><AlignIcon mode="center" /></Tool>
            <Tool $w={24}><AlignIcon mode="right" /></Tool>
            <Tool $w={23} $active><JustifyIcon /></Tool>
            <Tool $w={26}><DistributeIcon /></Tool>
            <Sep $w={6} />
            <Tool $w={24}><LineSpacingIcon /></Tool>
            <Tool $w={10}><Caret /></Tool>
            <Sep $w={14} />
            <Tool $w={18}><ShadingIcon /></Tool>
            <Tool $w={18}><Caret /></Tool>
            <Tool $w={22}><BorderIcon /></Tool>
            <Tool $w={14}><Caret /></Tool>
          </ToolRow>
          <GroupLabel $w={260}>段落</GroupLabel>
          <LauncherIcon />
        </Group>

        <Group $w={974}>
          <Gallery>
            {GALLERY.map((g) => (
              <StyleItem key={g.name} $selected={g.selected}>
                <StylePreview $font={g.font} $size={g.size} $bold={g.bold} $italic={g.italic} $color={g.color} $ls={g.ls}>
                  {g.text}
                </StylePreview>
                <StyleName>{g.name}</StyleName>
              </StyleItem>
            ))}
            <GalleryScroll>
              <ScrollCell $h={20}><Caret color="#bbb" /></ScrollCell>
              <ScrollCell $h={19} $on><Caret color="#333" /></ScrollCell>
              <ScrollCell $h={18} $on><MoreIcon color="#333" /></ScrollCell>
            </GalleryScroll>
          </Gallery>
          <GroupLabel $w={954}>樣式</GroupLabel>
          <LauncherIcon />
        </Group>

        <Group $w={85} $pl={12} $last>
          <EditBody>
            <EditRow><SearchGlass color="#444" size={16} />尋找<EditCaret><Caret /></EditCaret></EditRow>
            <EditRow><ReplaceIcon />取代</EditRow>
            <EditRow $gap={5}><PointerIcon />選取<Caret /></EditRow>
          </EditBody>
          <GroupLabel $w={62}>編輯</GroupLabel>
        </Group>
        <Collapse viewBox="0 0 10 6" fill="none" stroke="#444"><path d="M.5 5.5L5 1l4.5 4.5" /></Collapse>
      </Ribbon>

      <RulerRow>
        <RulerCorner />
        <HRuler />
      </RulerRow>

      <Workspace>
        <VRulerBox><VRuler /></VRulerBox>
        <Pages>
          <Page>
            <CropRow><CropMark /><CropMark $right /></CropRow>
            <PageBody>
              <DocHeading $top={23} $caret>四、圖表</DocHeading>
              {CHARTS.map(([title, code]) => (
                <ChartBlock key={code}>
                  <DocLine>{title}</DocLine>
                  <DocLine>{code}</DocLine>
                </ChartBlock>
              ))}
            </PageBody>
          </Page>
          <Page>
            <CropRow><CropMark /><CropMark $right /></CropRow>
            <PageBody>
              <DocHeading $top={11}>五、分析與說明</DocHeading>
              {SECTIONS.map((s, i) => (
                <div key={s.title}>
                  {i === 0 ? <DocLine>{s.title}</DocLine> : <SectionLine>{s.title}</SectionLine>}
                  <Item $wide={s.wide}>
                    <ItemNum $wide={s.wide}>(1)</ItemNum>
                    <div>
                      {s.lines.map(([text, ls]) => (
                        <ItemLine key={text} $ls={ls}>{text}</ItemLine>
                      ))}
                    </div>
                  </Item>
                  {s.code && (
                    <Item $wide={s.wide}>
                      <ItemNum $wide={s.wide}>(2)</ItemNum>
                      <ItemLine>{s.code}</ItemLine>
                    </Item>
                  )}
                </div>
              ))}
            </PageBody>
          </Page>
        </Pages>
        <Scrollbar>
          <ScrollBtn>
            <svg width="9" height="5" viewBox="0 0 9 5"><path d="M4.5 0L9 5H0z" fill="#666" /></svg>
          </ScrollBtn>
          <ScrollThumb />
          <ScrollBtn>
            <svg width="9" height="5" viewBox="0 0 9 5"><path d="M0 0h9L4.5 5z" fill="#666" /></svg>
          </ScrollBtn>
        </Scrollbar>
      </Workspace>

      <StatusBar>
        {STATUS.map(([t, w]) => (
          <StatusText key={t} $w={w}>{t}</StatusText>
        ))}
        <ZoomArea>
          <ZoomSymbol>−</ZoomSymbol>
          <ZoomTrack />
          <ZoomSymbol>+</ZoomSymbol>
          <ZoomValue>100%</ZoomValue>
        </ZoomArea>
      </StatusBar>

      <Taskbar>
        <TaskCell $w={48}><WinLogo /></TaskCell>
        <TaskCell $w={48}><TaskGlass /></TaskCell>
        <TaskCell $w={50}><TaskView /></TaskCell>
        <TaskCell $w={49} $pinned><ChromeLogo /></TaskCell>
        <TaskCell $w={49} $pinned><FolderLogo /></TaskCell>
        <TaskCell $w={49} $pinned><VSCodeLogo /></TaskCell>
        <TaskCell $w={49} $pinned><ChromeProfile /></TaskCell>
        <TaskCell $w={49} $pinned><AcrobatLogo /></TaskCell>
        <TaskCell $w={48} $pinned $active><WordLogo /></TaskCell>
        <Tray>
          <TrayItem $w={24}><WeatherIcon /></TrayItem>
          <TrayItem $w={46}>35°C</TrayItem>
          <TrayItem $w={60} $mr={17}>多雲時晴</TrayItem>
          <TrayItem $w={26}><TrayUp /></TrayItem>
          <TrayItem $w={24}><WifiIcon /></TrayItem>
          <TrayItem $w={22}><VolumeIcon /></TrayItem>
          <TrayItem $w={35}><KeyboardIcon /></TrayItem>
          <TrayItem $w={30} $font={LATIN} $size={12}>ENG</TrayItem>
          <Clock>
            <span>下午 03:32</span>
            <span>2023/7/13</span>
          </Clock>
          <NotifyCell>
            <NotifyIcon />
            <Badge>1</Badge>
          </NotifyCell>
        </Tray>
      </Taskbar>
    </Shell>
  );
}
